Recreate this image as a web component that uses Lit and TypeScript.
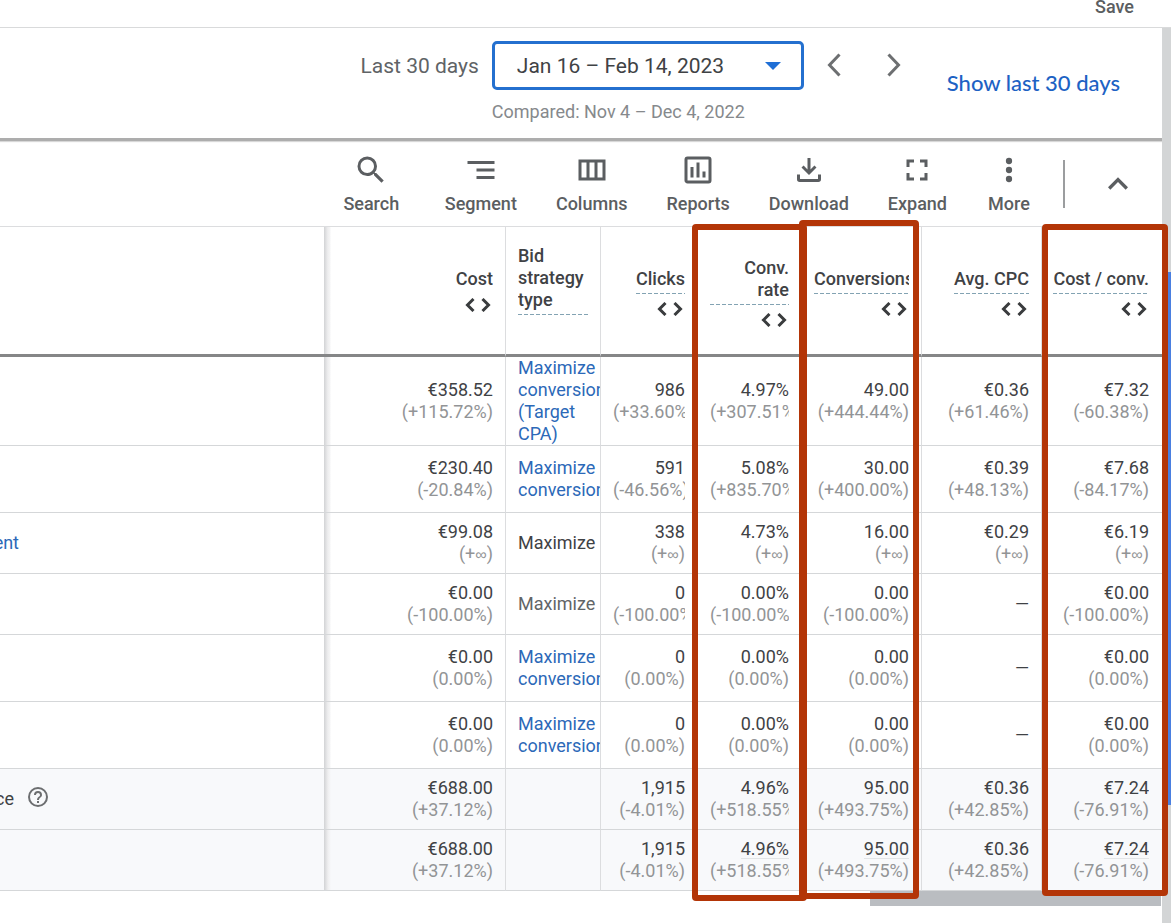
import { LitElement, html, svg, css, nothing } from "lit";
import { customElement, property } from "lit/decorators.js";

type Cell = [string, string] | null;

interface Row {
  name?: string;
  nameKind?: "link" | "help";
  bid?: string;
  bidKind?: "link" | "muted";
  tall?: boolean;
  total?: boolean;
  marked?: boolean;
  cells: Cell[];
}

interface Column {
  key: string;
  label: string;
  tip?: boolean;
  arrows?: boolean;
}

const COLUMNS: Column[] = [
  { key: "cost", label: "Cost", arrows: true },
  { key: "bid", label: "Bid strategy type", tip: true },
  { key: "clicks", label: "Clicks", tip: true, arrows: true },
  { key: "rate", label: "Conv. rate", tip: true, arrows: true },
  { key: "conversions", label: "Conversions", tip: true, arrows: true },
  { key: "cpc", label: "Avg. CPC", tip: true, arrows: true },
  { key: "cpa", label: "Cost / conv.", tip: true, arrows: true },
];

const ROWS: Row[] = [
  {
    bid: "Maximize conversions (Target CPA)",
    bidKind: "link",
    cells: [["€358.52", "(+115.72%)"], ["986", "(+33.60%)"], ["4.97%", "(+307.51%)"], ["49.00", "(+444.44%)"], ["€0.36", "(+61.46%)"], ["€7.32", "(-60.38%)"]],
  },
  {
    bid: "Maximize conversions",
    bidKind: "link",
    tall: true,
    cells: [["€230.40", "(-20.84%)"], ["591", "(-46.56%)"], ["5.08%", "(+835.70%)"], ["30.00", "(+400.00%)"], ["€0.39", "(+48.13%)"], ["€7.68", "(-84.17%)"]],
  },
  {
    name: "ent",
    nameKind: "link",
    bid: "Maximize",
    cells: [["€99.08", "(+∞)"], ["338", "(+∞)"], ["4.73%", "(+∞)"], ["16.00", "(+∞)"], ["€0.29", "(+∞)"], ["€6.19", "(+∞)"]],
  },
  {
    bid: "Maximize",
    bidKind: "muted",
    cells: [["€0.00", "(-100.00%)"], ["0", "(-100.00%)"], ["0.00%", "(-100.00%)"], ["0.00", "(-100.00%)"], null, ["€0.00", "(-100.00%)"]],
  },
  {
    bid: "Maximize conversions",
    bidKind: "link",
    tall: true,
    cells: [["€0.00", "(0.00%)"], ["0", "(0.00%)"], ["0.00%", "(0.00%)"], ["0.00", "(0.00%)"], null, ["€0.00", "(0.00%)"]],
  },
  {
    bid: "Maximize conversions",
    bidKind: "link",
    tall: true,
    cells: [["€0.00", "(0.00%)"], ["0", "(0.00%)"], ["0.00%", "(0.00%)"], ["0.00", "(0.00%)"], null, ["€0.00", "(0.00%)"]],
  },
  {
    name: "ce",
    nameKind: "help",
    total: true,
    cells: [["€688.00", "(+37.12%)"], ["1,915", "(-4.01%)"], ["4.96%", "(+518.55%)"], ["95.00", "(+493.75%)"], ["€0.36", "(+42.85%)"], ["€7.24", "(-76.91%)"]],
  },
  {
    total: true,
    marked: true,
    cells: [["€688.00", "(+37.12%)"], ["1,915", "(-4.01%)"], ["4.96%", "(+518.55%)"], ["95.00", "(+493.75%)"], ["€0.36", "(+42.85%)"], ["€7.24", "(-76.91%)"]],
  },
];

const ICONS: Record<string, ReturnType<typeof svg>> = {
  search: svg`<path d="M15.5 14h-.79l-.28-.27A6.47 6.47 0 0 0 16 9.5 6.5 6.5 0 1 0 9.5 16c1.61 0 3.09-.59 4.23-1.57l.27.28v.79l5 4.99L20.49 19l-4.99-5zm-6 0C7.01 14 5 11.99 5 9.5S7.01 5 9.5 5 14 7.01 14 9.5 11.99 14 9.5 14z"/>`,
  segment: svg`<path d="M9 18h12v-2H9v2zM3 6v2h18V6H3zm6 7h12v-2H9v2z"/>`,
  columns: svg`<path d="M3 5v14h18V5H3zm5.33 12H5V7h3.33v10zm5.34 0h-3.33V7h3.33v10zM19 17h-3.33V7H19v10z"/>`,
  reports: svg`<path d="M19 3H5a2 2 0 0 0-2 2v14c0 1.1.9 2 2 2h14a2 2 0 0 0 2-2V5a2 2 0 0 0-2-2zm0 16H5V5h14v14zM7 10h2v7H7v-7zm4-3h2v10h-2V7zm4 6h2v4h-2v-4z"/>`,
  download: svg`<path d="M11 4h2v7.6l2.6-2.6L17 10.4l-5 5-5-5L8.4 9l2.6 2.6V4zM4 15h2v3h12v-3h2v3.2a1.800 1.800 0 0 1-1.800 1.800H5.800A1.800 1.800 0 0 1 4 18.200V15z"/>`,
  expand: svg`<path d="M7 14H5v5h5v-2H7v-3zm-2-4h2V7h3V5H5v5zm12 7h-3v2h5v-5h-2v3zM14 5v2h3v3h2V5h-5z"/>`,
  more: svg`<circle cx="12" cy="6" r="2.1"/><circle cx="12" cy="12" r="2.1"/><circle cx="12" cy="18" r="2.1"/>`,
  up: svg`<path d="M12 8l-6 6 1.41 1.41L12 10.83l4.59 4.58L18 14z"/>`,
  help: svg`<path d="M11 18h2v-2h-2v2zm1-16a10 10 0 1 0 0 20 10 10 0 0 0 0-20zm0 18a8 8 0 1 1 0-16 8 8 0 0 1 0 16zm0-14a4 4 0 0 0-4 4h2c0-1.1.9-2 2-2s2 .9 2 2c0 2-3 1.75-3 5h2c0-2.25 3-2.5 3-5a4 4 0 0 0-4-4z"/>`,
};

const icon = (name: string) =>
  html`<svg class="icon ${name}" viewBox="0 0 24 24" aria-hidden="true">${ICONS[name]}</svg>`;

@customElement("stats-toolbar")
class StatsToolbar extends LitElement {
  static styles = css`
    :host {
      display: flex;
      justify-content: flex-end;
      align-items: center;
      padding: 10px 24px 11px 0;
    }
    button {
      border: 0;
      padding: 0;
      background: none;
      color: #5b5e61;
      font: 500 18px/22px Roboto, sans-serif;
    }
    .tools {
      display: flex;
      gap: 39px;
    }
    .tool {
      display: flex;
      flex-direction: column;
      align-items: center;
      gap: 5px;
      min-width: 46px;
    }
    .tool.search {
      min-width: 69px;
    }
    .icon {
      display: block;
      width: 36px;
      height: 36px;
      fill: currentColor;
    }
    .icon.up {
      width: 40px;
      height: 40px;
    }
    .divider {
      width: 2px;
      height: 48px;
      margin: 0 33px 0 31px;
      background: #9b9d9f;
    }
  `;

  render() {
    const tools = ["Search", "Segment", "Columns", "Reports", "Download", "Expand", "More"];
    return html`
      <div class="tools">
        ${tools.map((t) => html`<button class="tool ${t.toLowerCase()}">${icon(t.toLowerCase())}<span>${t}</span></button>`)}
      </div>
      <div class="divider"></div>
      <button aria-label="Collapse">${icon("up")}</button>
    `;
  }
}

@customElement("date-range")
class DateRange extends LitElement {
  static styles = css`
    :host {
      display: flex;
      justify-content: flex-end;
      align-items: flex-start;
      min-height: 97px;
      margin-bottom: 1px;
      padding: 13px 42px 0 0;
      border-bottom: 3px solid #adadad;
      box-shadow: 0 1px 1px #d8d8d8;
      color: #606366;
      font: 400 21px/24px Roboto, sans-serif;
    }
    .label {
      padding: 13px 13px 0 0;
    }
    .picker {
      position: relative;
      width: 312px;
    }
    select {
      appearance: none;
      display: block;
      box-sizing: border-box;
      width: 100%;
      height: 49px;
      padding: 0 22px;
      border: 3px solid #2470cf;
      border-radius: 5px;
      background: #fff;
      color: #3f4245;
      font: inherit;
    }
    .caret {
      position: absolute;
      top: 21px;
      right: 23px;
      width: 16px;
      height: 8px;
      fill: #1f6fd6;
    }
    .compared {
      margin: 0;
      padding-top: 11px;
      color: #86898c;
      font-size: 18px;
      line-height: 22px;
    }
    .steps {
      display: flex;
      gap: 20px;
      padding: 4px 0 0 10px;
    }
    .steps button {
      display: grid;
      place-items: center;
      width: 40px;
      height: 40px;
      padding: 0;
      border: 0;
      background: none;
      color: #6d6f71;
    }
    .steps svg {
      width: 14px;
      height: 24px;
      fill: none;
      stroke: currentColor;
      stroke-width: 3;
    }
    .show {
      padding: 30px 0 0 33px;
      color: #1d62c4;
      font-family: Lato, sans-serif;
      font-size: 22px;
      font-weight: 500;
      text-decoration: none;
    }
  `;

  render() {
    return html`
      <label class="label" for="range">Last 30 days</label>
      <div class="picker">
        <select id="range"><option>Jan 16 – Feb 14, 2023</option></select>
        <svg class="caret" viewBox="0 0 16 8" aria-hidden="true"><path d="M0 0h16l-8 8z"/></svg>
        <p class="compared">Compared: Nov 4 – Dec 4, 2022</p>
      </div>
      <div class="steps">
        <button aria-label="Previous period"><svg viewBox="0 0 14 24"><path d="M12.5 1.5L2.5 12l10 10.5"/></svg></button>
        <button aria-label="Next period"><svg viewBox="0 0 14 24"><path d="M1.5 1.5L11.5 12l-10 10.5"/></svg></button>
      </div>
      <a class="show" href="#">Show last 30 days</a>
    `;
  }
}

@customElement("campaign-table")
class CampaignTable extends LitElement {
  @property({ attribute: false }) rows: Row[] = [];

  static styles = css`
    :host {
      display: block;
      position: relative;
      color: #3f4245;
      font: 400 18px/22px Roboto, sans-serif;
    }
    table {
      width: 100%;
      table-layout: fixed;
      border-spacing: 0;
      border-top: 1px solid #dcdddf;
    }
    col.cost { width: 182px; }
    col.bid { width: 95px; }
    col.clicks { width: 97px; }
    col.rate { width: 104px; }
    col.conversions, col.cpc, col.cpa { width: 120px; }
    th, td {
      padding: 8px 12px;
      border-right: 1px solid #dcdddf;
      border-bottom: 1px solid #d5d7d9;
      text-align: right;
      vertical-align: middle;
      font-weight: 400;
    }
    .name, .cpa {
      border-right: 0;
    }
    .cpa {
      padding-left: 8px;
      padding-right: 13px;
    }
    .name {
      padding: 0;
      text-align: left;
    }
    .cost {
      background: linear-gradient(to right, #d2d3d5, #efeff0 4px, transparent 7px);
    }
    .bid {
      text-align: left;
    }
    thead th {
      box-sizing: border-box;
      height: 130px;
      padding-top: 2px;
      padding-bottom: 0;
      border-bottom: 3px solid #858687;
      font-weight: 500;
    }
    thead .cost {
      padding-bottom: 4px;
    }
    thead .bid {
      padding-bottom: 24px;
    }
    .head {
      display: flex;
      flex-direction: column;
      align-items: flex-end;
      overflow: hidden;
    }
    .bid .head {
      align-items: flex-start;
    }
    .tip {
      max-width: 100%;
      padding-bottom: 4px;
      background: repeating-linear-gradient(to right, #83a3b3 0 4px, transparent 4px 6px) bottom / 100% 1px no-repeat;
    }
    .arrows {
      display: block;
      width: 26px;
      height: 14px;
      margin: 8px 2px 0 0;
      fill: none;
      stroke: #3a3c3e;
      stroke-width: 3;
    }
    .tall td {
      padding-top: 11px;
      padding-bottom: 11px;
    }
    tbody td.bid {
      padding: 0 0 0 12px;
    }
    .strategy {
      overflow: hidden;
    }
    .strategy.muted {
      color: #626567;
    }
    a {
      color: #2c69b8;
      text-decoration: none;
    }
    .total td {
      background-color: #f8f9fb;
    }
    .value, .delta {
      display: block;
      overflow: hidden;
      white-space: nowrap;
    }
    .delta {
      color: #929496;
    }
    .infinity {
      font-family: "Liberation Sans", sans-serif;
      font-size: 16px;
      line-height: 16px;
    }
    .marked .rate .mark, .marked .conversions .mark, .marked .cpa .mark {
      background: linear-gradient(#e2e4e6, #e2e4e6) bottom / 100% 1px no-repeat;
    }
    .entry {
      display: flex;
      align-items: center;
      gap: 12px;
    }
    .cut {
      display: flex;
      justify-content: flex-end;
      width: 14px;
      overflow: hidden;
    }
    .cut.link {
      width: 19px;
    }
    .icon {
      width: 24px;
      height: 24px;
      padding-bottom: 4px;
      fill: #6c6e70;
    }
    .scroll {
      display: block;
      width: 291px;
      height: 15px;
      margin: 0 1px 0 auto;
      background: #babdc1;
    }
    .frame {
      position: absolute;
      box-sizing: border-box;
      border: 6px solid #b33507;
      border-radius: 4px;
    }
    .frame.on-rate {
      top: -2px;
      right: 355px;
      width: 115px;
      height: 677px;
    }
    .frame.on-conversions {
      top: -6px;
      right: 243px;
      width: 120px;
      height: 679px;
    }
    .frame.on-cpa {
      top: -2px;
      right: -6px;
      width: 126px;
      height: 672px;
    }
  `;

  private nameCell(row: Row) {
    if (!row.name) return nothing;
    if (row.nameKind === "link") return html`<div class="entry"><a class="cut link" href="#">${row.name}</a></div>`;
    return html`<div class="entry"><span class="cut">${row.name}</span>${icon("help")}</div>`;
  }

  private bidCell(row: Row) {
    if (!row.bid) return nothing;
    return html`<div class="strategy ${row.bidKind ?? ""}">
      ${row.bidKind === "link" ? html`<a href="#">${row.bid}</a>` : row.bid}
    </div>`;
  }

  private delta(text: string) {
    return text === "(+∞)" ? html`(+<span class="infinity">∞</span>)` : text;
  }

  private metric(key: string, cell: Cell) {
    return html`<td class=${key}>
      ${cell
        ? html`<span class="value"><span class="mark">${cell[0]}</span></span><span class="delta">${this.delta(cell[1])}</span>`
        : "—"}
    </td>`;
  }

  render() {
    return html`
      <table>
        <colgroup>
          <col />
          ${COLUMNS.map((c) => html`<col class=${c.key} />`)}
        </colgroup>
        <thead>
          <tr>
            <th class="name" aria-label="Campaign"></th>
            ${COLUMNS.map(
              (c) => html`<th class=${c.key}>
                <div class="head">
                  <span class=${c.tip ? "tip" : ""}>${c.label}</span>
                  ${c.arrows
                    ? html`<svg class="arrows" viewBox="0 0 26 14" aria-hidden="true"><path d="M8.500 1L2.500 7l6 6M17.500 1l6 6-6 6"/></svg>`
                    : nothing}
                </div>
              </th>`
            )}
          </tr>
        </thead>
        <tbody>
          ${this.rows.map(
            (r) => html`<tr class="${r.tall ? "tall" : ""} ${r.total ? "total" : ""} ${r.marked ? "marked" : ""}">
              <td class="name">${this.nameCell(r)}</td>
              ${this.metric("cost", r.cells[0])}
              <td class="bid">${this.bidCell(r)}</td>
              ${["clicks", "rate", "conversions", "cpc", "cpa"].map((k, i) => this.metric(k, r.cells[i + 1]))}
            </tr>`
          )}
        </tbody>
      </table>
      <div class="scroll"></div>
      <div class="frame on-rate"></div>
      <div class="frame on-conversions"></div>
      <div class="frame on-cpa"></div>
    `;
  }
}

@customElement("app-root")
class AppRoot extends LitElement {
  static styles = css`
    :host {
      display: flex;
      flex-direction: column;
      min-height: 100vh;
      overflow: hidden;
      background: #fff;
    }
    .top {
      display: flex;
      justify-content: flex-end;
      padding: 0 37px 13px;
      border-bottom: 1px solid #d9dadb;
    }
    .save {
      padding: 0;
      border: 0;
      background: none;
      color: #5b5e61;
      font: 500 18px/14px Roboto, sans-serif;
    }
    .body {
      flex: 1;
      display: flex;
    }
    .main {
      flex: 1;
      min-width: 0;
      z-index: 1;
    }
    .track {
      width: 9px;
      background: #d3d5d6;
    }
    .thumb {
      height: 533px;
      margin: 244px 0 0 6px;
      background: #4a7fe0;
    }
  `;

  render() {
    return html`
      <div class="top"><button class="save">Save</button></div>
      <div class="body">
        <div class="main">
          <date-range></date-range>
          <stats-toolbar></stats-toolbar>
          <campaign-table .rows=${ROWS}></campaign-table>
        </div>
        <div class="track"><div class="thumb"></div></div>
      </div>
    `;
  }
}
